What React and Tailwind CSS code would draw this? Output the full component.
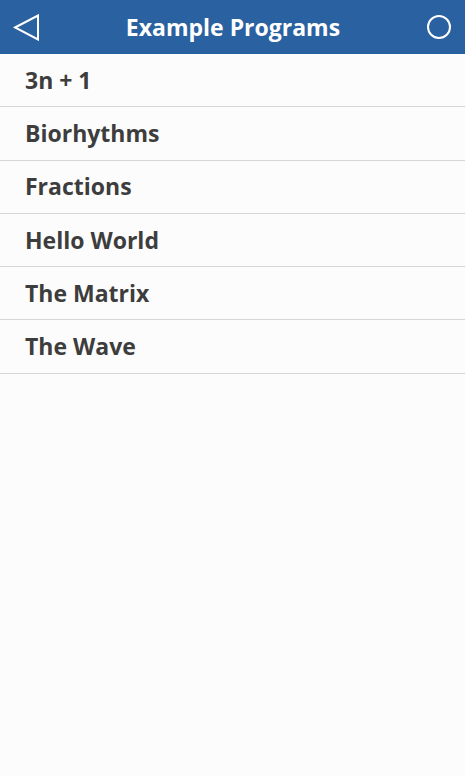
import React from 'react'

const programs = ['3n + 1', 'Biorhythms', 'Fractions', 'Hello World', 'The Matrix', 'The Wave']

const App = () => {
    return (
        <div className="w-[465px] h-[776px] bg-[#fcfcfc] flex flex-col" style={{ fontFamily: '"Open Sans", sans-serif' }}>
            <div className="h-[54px] bg-[#2a61a0] flex items-center justify-between px-[13px] shrink-0">
                <svg width="27" height="27" viewBox="0 0 27 27">
                    <path d="M2 13.5 L25 1.5 L25 25.5 Z" fill="none" stroke="white" strokeWidth="2" strokeLinejoin="miter" />
                </svg>
                <span className="text-white font-bold text-[23px] leading-none">Example Programs</span>
                <svg width="26" height="26" viewBox="0 0 26 26">
                    <circle cx="13" cy="13" r="11" fill="none" stroke="white" strokeWidth="2" />
                </svg>
            </div>
            <div className="flex flex-col">
                {programs.map(name => (
                    <div key={name} className="h-[53.3px] border-b border-[#d6d6d6] flex items-center pl-[25px]">
                        <span className="text-[#3d3d3d] font-bold text-[23px] leading-none">{name}</span>
                    </div>
                ))}
            </div>
        </div>
    )
}

export default App
